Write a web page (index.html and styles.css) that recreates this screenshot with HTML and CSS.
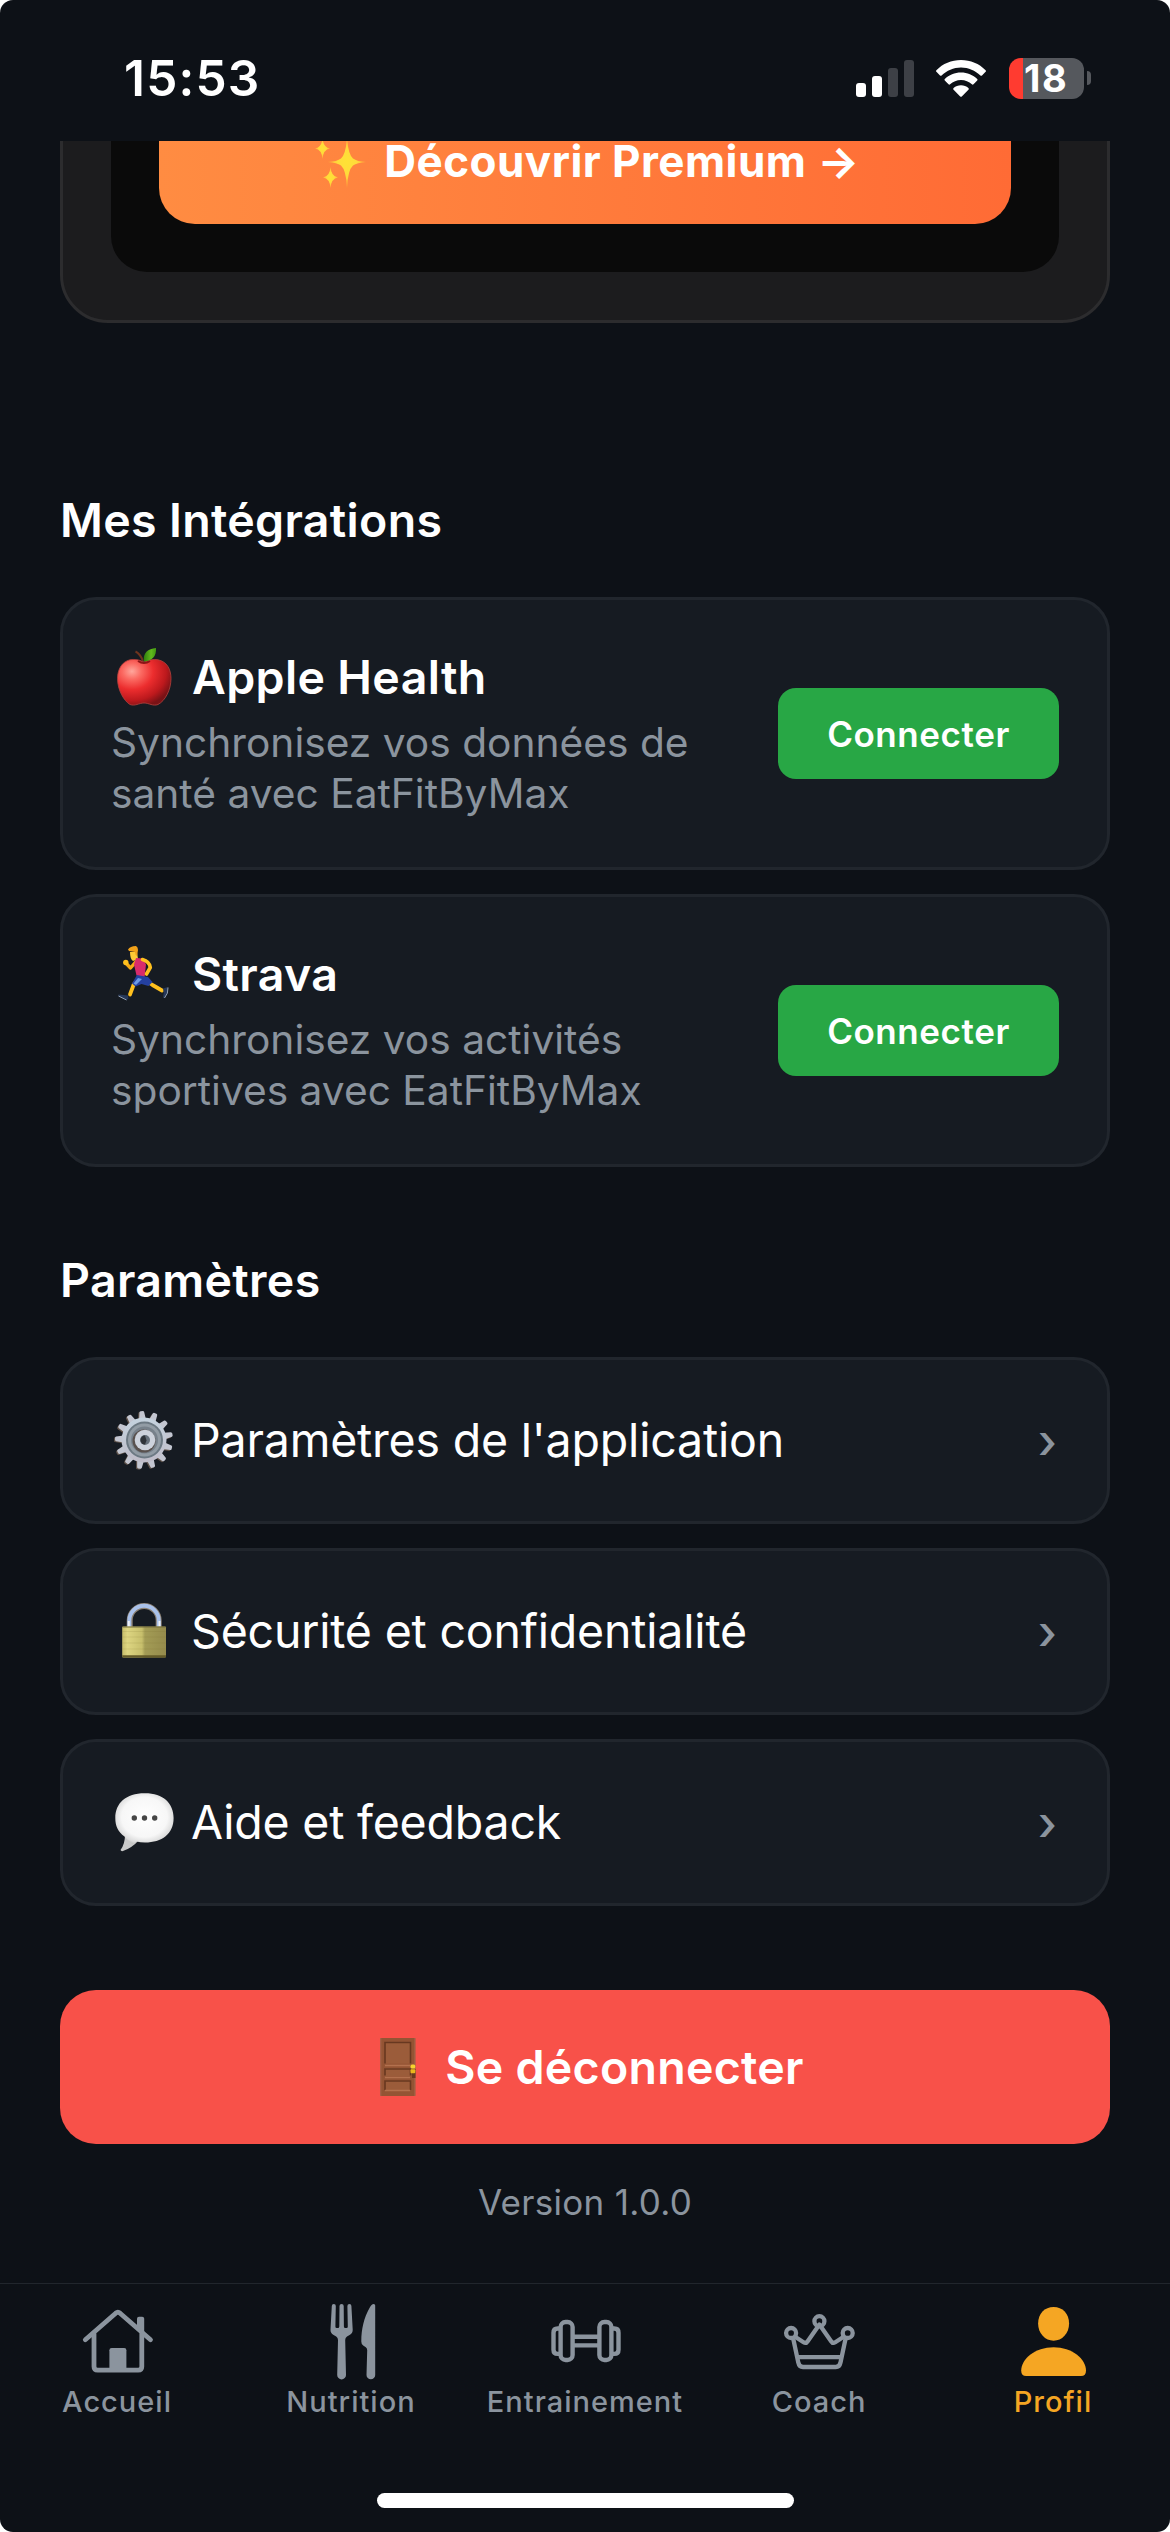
FILE: index.html
```html
<!DOCTYPE html>
<html lang="fr">
<head>
<meta charset="utf-8">
<title>Profil</title>
<link rel="stylesheet" href="styles.css">
</head>
<body>
<div class="screen">
  <header class="status">
    <span class="time">15:53</span>
    <div class="status-icons">
      <svg class="signal" viewBox="0 0 58 37"><g fill="#fff"><rect x="0" y="23" width="10" height="14" rx="3"/><rect x="16" y="16" width="10" height="21" rx="3"/></g><g fill="#3d4046"><rect x="32" y="8" width="10" height="29" rx="3"/><rect x="48" y="0" width="10" height="37" rx="3"/></g></svg>
      <svg class="wifi" viewBox="0 0 50 37" fill="#fff"><path d="M25 0C34.5 0 43.2 3.7 49.6 10.2q.8.8 0 1.6L46 15.4q-.8.8-1.6 0C39.2 10.4 32.5 7.4 25 7.4S10.800 10.4 5.600 15.4q-.8.8-1.600 0L.4 11.800q-.8-.8 0-1.600C6.800 3.7 15.500 0 25 0Z"/><path d="M25 12.500c6.300 0 12 2.500 16.200 6.500q.8.8 0 1.600l-3.700 3.700q-.8.8-1.600 0C33 21.600 29.200 20 25 20s-8 1.600-10.900 4.300q-.8.8-1.600 0l-3.700-3.700q-.8-.8 0-1.600c4.200-4 9.900-6.500 16.200-6.500Z"/><path d="M25 25.300c2.800 0 5.400 1 7.400 2.800q.8.8 0 1.600l-6.600 6.700q-.8.8-1.600 0l-6.600-6.700q-.8-.8 0-1.600c2-1.800 4.600-2.800 7.400-2.800Z"/></svg>
      <div class="battery"><span class="level">18</span></div>
      <span class="nub"></span>
    </div>
  </header>

  <main class="content">
    <section class="premium">
      <div class="premium-inner">
        <button class="premium-button">
          <svg class="emoji-m" viewBox="0 0 56 56"><defs><radialGradient id="spark"><stop offset="0" stop-color="#ffe135"/><stop offset=".5" stop-color="#ffdb3b"/><stop offset="1" stop-color="#ffb13a"/></radialGradient></defs><g fill="url(#spark)"><path d="M34 3Q34.800 21 40 25.500Q44 28.500 53 29Q44 29.500 40 32.500Q34.800 37 34 55Q33.200 37 28 32.500Q24 29.500 15 29Q24 28.500 28 25.500Q33.200 21 34 3Z"/><path d="M9.500 5Q10.200 14.500 17 15.500Q10.200 16.500 9.500 26Q8.800 16.500 2 15.500Q8.800 14.500 9.500 5Z"/><path d="M17.500 34Q18.200 43.500 25 44.500Q18.200 45.500 17.500 55Q16.800 45.500 10 44.500Q16.800 43.500 17.500 34Z"/></g></svg>
          <span>Découvrir Premium →</span>
        </button>
      </div>
    </section>

    <section class="integrations">
      <h2>Mes Intégrations</h2>
      <article class="card">
        <div class="card-text">
          <h3><svg class="emoji" viewBox="0 0 60 60"><defs><radialGradient id="apple" cx=".27" cy=".26" r=".8"><stop offset="0" stop-color="#ffa79c"/><stop offset=".22" stop-color="#fb6a62"/><stop offset=".5" stop-color="#ec2d2e"/><stop offset=".8" stop-color="#bd191d"/><stop offset="1" stop-color="#7a1216"/></radialGradient><linearGradient id="leaf"><stop offset="0" stop-color="#2f7d0d"/><stop offset=".6" stop-color="#62b81d"/><stop offset="1" stop-color="#3f9710"/></linearGradient></defs><path d="M30 15C35 12.500 40 12 44 12.800C53 14.500 57 22.500 57 31.500C57 43 51 54 44 57.500C39 59.500 35 56 30 56C25 56 21 59.500 16 57.500C10 54 3.500 43 3.500 31.500C3.500 22.500 8 14.500 16 12.800C21 12 25 12.500 30 15Z" fill="url(#apple)" stroke="#b5413c" stroke-width=".8"/><path d="M24 14Q30 18 36 14" fill="none" stroke="#8d1416" stroke-width="2"/><path d="M21.500 4.500Q26 6.500 29 14" fill="none" stroke="#70341e" stroke-width="2"/><path d="M30 14.500C28.500 6 34 1.500 42 1C42.500 9 38.500 14 30 14.500Z" fill="url(#leaf)"/></svg><span>Apple Health</span></h3>
          <p>Synchronisez vos données de santé avec EatFitByMax</p>
        </div>
        <button class="connect">Connecter</button>
      </article>
      <article class="card">
        <div class="card-text">
          <h3><svg class="emoji" viewBox="0 0 60 60"><g fill="none" stroke-linecap="round" stroke-linejoin="round"><path d="M22.500 17L16.500 24L12.300 19.500" stroke="#f5a915" stroke-width="3.400"/><path d="M31 36L38.500 41L48 46.500" stroke="#ffc01e" stroke-width="3.800"/><path d="M26 35Q20 38 18.800 43L16 50.500" stroke="#ffc01e" stroke-width="3.800"/></g><circle cx="11.800" cy="18.500" r="2.700" fill="#ffc01e"/><path d="M16 8h7l1 7-5 2q-3-2-3-9Z" fill="#ffca35"/><path d="M14 5.500Q16 2 22 2q2 1 2 4l-1 6q-2-1-2-4l-6-1Z" fill="#f2a21a"/><path d="M22 14l7 .500 3 6-1.500 13-8-2-2.500-11Z" fill="#d92b6b"/><path d="M23 31l11 2 4.500 5-4 4-7-2-6 2.500-3.500-3Z" fill="#2440a0"/><path d="M24 34l4 1-6 6-2.500-1.500Z" fill="#6c9ae6"/><path d="M28.500 15.500Q35.500 17.500 36.300 23.500L32.500 30" fill="none" stroke="#ffc01e" stroke-width="3.600" stroke-linecap="round" stroke-linejoin="round"/><path d="M4.500 50.500l9.500 1 .500 3-2 1.500-8-4Z" fill="#26385a"/><path d="M49 44.500l4.800-1.500q.700 6-3.300 11l-1.500-.500q1.500-5 0-9Z" fill="#26385a"/><path d="M4.500 52l8 4M54 43.500q.500 6-3.500 10.500" fill="none" stroke="#93a0b2" stroke-width="1"/></svg><span>Strava</span></h3>
          <p>Synchronisez vos activités sportives avec EatFitByMax</p>
        </div>
        <button class="connect">Connecter</button>
      </article>
    </section>

    <section class="settings">
      <h2>Paramètres</h2>
      <div class="row">
        <svg class="emoji" viewBox="0 0 60 60"><defs><linearGradient id="steel" x2="0" y2="1"><stop offset="0" stop-color="#c5d3df"/><stop offset="1" stop-color="#bfbcc8"/></linearGradient><path id="tooth" d="M26.800 10L27.900 2Q28.300 1 29.300 1H31.300Q32.300 1 32.600 2L33.800 10Z"/><g id="teeth"><use href="#tooth"/><use href="#tooth" transform="rotate(27.690 30 30)"/><use href="#tooth" transform="rotate(55.380 30 30)"/><use href="#tooth" transform="rotate(83.080 30 30)"/><use href="#tooth" transform="rotate(110.770 30 30)"/><use href="#tooth" transform="rotate(138.460 30 30)"/><use href="#tooth" transform="rotate(166.150 30 30)"/><use href="#tooth" transform="rotate(193.850 30 30)"/><use href="#tooth" transform="rotate(221.540 30 30)"/><use href="#tooth" transform="rotate(249.230 30 30)"/><use href="#tooth" transform="rotate(276.920 30 30)"/><use href="#tooth" transform="rotate(304.620 30 30)"/><use href="#tooth" transform="rotate(332.310 30 30)"/></g></defs><g transform="rotate(-5 30 30)"><use href="#teeth" x="-1.200" y=".8" fill="#5d5149"/><use href="#teeth" fill="#c3c6d1"/></g><circle cx="30" cy="30" r="22.500" fill="url(#steel)"/><circle cx="30.500" cy="30" r="18.500" fill="#6c7983"/><circle cx="30.500" cy="30" r="16.500" fill="#929ca5"/><circle cx="30.500" cy="30" r="13.500" fill="#77818b"/><circle cx="30" cy="31" r="11.500" fill="#59514e"/><circle cx="31" cy="30" r="10.300" fill="#cdd2dc"/><circle cx="31" cy="30" r="5" fill="#67717c"/><path d="M31 25.500a4.500 4.500 0 0 0 0 9l1.500-4Z" fill="#30343a"/></svg>
        <span class="label">Paramètres de l'application</span><span class="chevron">›</span>
      </div>
      <div class="row">
        <svg class="emoji" viewBox="0 0 60 60"><defs><linearGradient id="brass"><stop offset="0" stop-color="#c6bd6a"/><stop offset=".12" stop-color="#ddd581"/><stop offset=".45" stop-color="#c7bf6c"/><stop offset=".52" stop-color="#a39c55"/><stop offset="1" stop-color="#958b4c"/></linearGradient></defs><path d="M15.700 27V19.500a14.500 14.500 0 0 1 29 0V27" fill="none" stroke="#8c8172" stroke-width="6"/><path d="M15.300 27V19.500a14.700 14.700 0 0 1 29.500 0V27" fill="none" stroke="#a9c1ea" stroke-width="4"/><path d="M14.800 27V20M45.500 27V20" stroke="#eef1f7" stroke-width="2"/><rect x="8.200" y="25.500" width="43.800" height="31" rx="1" fill="url(#brass)"/><path d="M8.500 26h43" stroke="#756d3d" stroke-width="1"/><path d="M8.500 30.500h43M8.500 36h43M8.500 42h43M8.500 48h43" stroke="#786d2d" stroke-width=".7" opacity=".2"/><path d="M8.200 54.200H52v1.300q0 1-1 1H9.200q-1 0-1-1Z" fill="#645b29"/></svg>
        <span class="label">Sécurité et confidentialité</span><span class="chevron">›</span>
      </div>
      <div class="row">
        <svg class="emoji" viewBox="0 0 60 60"><defs><radialGradient id="bubble" cx=".5" cy=".47" r=".56"><stop offset="0" stop-color="#fff"/><stop offset=".7" stop-color="#f7f7f7"/><stop offset=".92" stop-color="#dcdcdc"/><stop offset="1" stop-color="#c2c2c2"/></radialGradient></defs><path d="M11 43Q11 52 6.500 58Q7 59.500 9 59Q18 56 25 48Z" fill="#c9c9c9"/><path d="M30.500 1.200C49 1 59.600 11 59.600 26C59.600 42 48 50.500 31 50.500Q26 50.500 22.500 49.500L18.500 52Q15 50 10.500 44.500C4 40 1.300 34 1.300 26C1.300 11 12 1.200 30.500 1.200Z" fill="url(#bubble)"/><g fill="#464646"><circle cx="20.300" cy="26" r="2.700"/><circle cx="30.500" cy="26" r="2.700"/><circle cx="40.700" cy="26" r="2.700"/></g></svg>
        <span class="label">Aide et feedback</span><span class="chevron">›</span>
      </div>
    </section>

    <button class="logout">
      <svg class="emoji" viewBox="0 0 60 60"><rect x="12.300" y="1" width="35" height="58" rx=".8" fill="#945434"/><path d="M12.800 1v58M46.900 1v58" stroke="#a1664c" stroke-width="1"/><path d="M17 5.500h25.500v21H17ZM17 31h25.500v8H17ZM17 43.500h25.500v10H17Z" fill="#9b5c3a"/><path d="M17 26.500V5.500h25.500v21M17 38.500V32h25.500v6.500M17 53V44h25.500v9" fill="none" stroke="#683820" stroke-width="1.600"/><path d="M17 28.500h25M17 40.500h25M17 53.500h25" stroke="#b3714e" stroke-width="1.500"/><rect x="44" y="32" width="3.500" height="9" fill="#6a391e"/><rect x="42.500" y="27.500" width="4.800" height="4" rx="1.500" fill="#f4d22e"/><rect x="42.500" y="32.200" width="4.800" height="4" rx="1" fill="#e9b71c"/></svg>
      <span>Se déconnecter</span>
    </button>
    <p class="version">Version 1.0.0</p>
  </main>

  <footer class="footer">
    <nav class="tabs">
      <a class="tab">
        <svg viewBox="0 0 84 84" fill="none" stroke="currentColor" stroke-width="4.800" stroke-linecap="round" stroke-linejoin="round"><path d="M10.300 40.700L40.700 14.200Q42.900 12.400 45.100 14.200L75.500 40.700"/><path d="M19 35V67.500Q19 71.200 22.700 71.200H63.100Q66.800 71.200 66.800 67.500V35"/><path d="M34.400 71V51.200Q34.400 49 36.600 49H49.200Q51.400 49 51.400 51.200V71Z" fill="currentColor" stroke="none"/><path d="M62 28V19.700Q62 17.700 64 17.700H67.200Q69.200 17.700 69.200 19.700V37L62 30Z" fill="currentColor" stroke="none"/></svg>
        <span>Accueil</span>
      </a>
      <a class="tab">
        <svg viewBox="0 0 84 84" fill="currentColor"><path d="M22.800 7a2 2 0 0 1 4 0L26.400 27.500Q26.400 29 27.700 29H29Q30.200 29 30.300 27.500L30.500 7a2.100 2.100 0 0 1 4.200 0L34.900 27.500Q35 29 36.200 29H37.500Q38.800 29 38.800 27.500L38.400 7a2 2 0 0 1 4 0L43.700 30.500Q43.900 34 41 35.700L38 37.500Q36.200 38.700 36.200 41L37 76a4.400 4.400 0 0 1-8.800 0L29 41Q29 38.700 27.200 37.500L24.200 35.700Q21.300 34 21.500 30.500Z"/><path d="M66.200 6.500Q66.200 5 64.700 5Q62.500 5 60.500 9C55 18.500 52.300 30 52.300 42.500Q52.300 45.400 54.200 46.600L56.800 48.300Q58.200 49.300 58.200 51.200L57.500 76a4.300 4.300 0 0 0 8.700 0Z"/></svg>
        <span>Nutrition</span>
      </a>
      <a class="tab">
        <svg viewBox="0 0 84 84" fill="none" stroke="currentColor" stroke-width="4.400"><g id="plates"><rect x="17.600" y="23" width="12" height="38" rx="5"/><path d="M16.500 29.500h-1.800q-4.200 0-4.200 4.200v17q0 4.200 4.200 4.200h1.800"/></g><use href="#plates" transform="matrix(-1 0 0 1 86 0)"/><path d="M30 37.700h26M30 46.400h26"/></svg>
        <span>Entrainement</span>
      </a>
      <a class="tab">
        <svg viewBox="0 0 84 84" fill="none" stroke="currentColor" stroke-width="4.300" stroke-linejoin="round"><circle cx="14.100" cy="34" r="5"/><circle cx="42.400" cy="22.200" r="5"/><circle cx="70.700" cy="34" r="5"/><path d="M18.500 38L26.500 43.200Q29 44.800 30.700 42.200L42.400 25.500L54.100 42.200Q55.800 44.800 58.300 43.200L66.300 38"/><path d="M16.200 39.500L21.300 63.500Q22.200 68 26 68H58.800Q62.600 68 63.500 63.500L68.600 39.500M20.500 58.200H64.300"/></svg>
        <span>Coach</span>
      </a>
      <a class="tab active">
        <svg viewBox="0 0 84 84" fill="currentColor"><path d="M42.600 8C51.500 8 58.100 14.500 58.100 24.500C58.100 34.500 51 41.700 42.600 41.700S27.100 34.500 27.100 24.500C27.100 14.500 33.700 8 42.600 8Z"/><path d="M42.600 48.200C61 48.200 75 60 75 71.500Q75 77 70 77H15.200Q10.200 77 10.200 71.500C10.200 60 24.200 48.200 42.600 48.200Z"/></svg>
        <span>Profil</span>
      </a>
    </nav>
    <div class="home-indicator"></div>
  </footer>
</div>
</body>
</html>
```
FILE: styles.css
```css
* {
  box-sizing: border-box;
}

body {
  margin: 0;
  background: #fff;
  font-family: "Inter", sans-serif;
  color: #fff;
}

h2, h3, p {
  margin: 0;
}

button {
  border: 0;
  font-family: inherit;
  color: inherit;
}

svg {
  display: block;
  flex: none;
}

.screen {
  display: flex;
  flex-direction: column;
  width: 1170px;
  height: 2532px;
  overflow: hidden;
  background: #0d1117;
  border-radius: 13px;
}

/* Status bar */
.status {
  display: flex;
  flex: none;
  justify-content: space-between;
  height: 141px;
  padding: 48px 79px 0 124px;
}

.time {
  font-size: 49.5px;
  font-weight: 600;
  line-height: 60px;
  letter-spacing: 1.2px;
}

.status-icons {
  display: flex;
  align-items: center;
  height: 60px;
}

.signal {
  width: 58px;
  height: 37px;
  margin-right: 22px;
}

.wifi {
  width: 50px;
  height: 37px;
  margin-right: 23px;
}

.battery {
  width: 75px;
  height: 41px;
  border-radius: 12px;
  background: linear-gradient(90deg, #ff3b30 14px, #55585d 14px);
}

.level {
  display: block;
  padding-left: 15px;
  font-size: 38px;
  font-weight: 700;
  line-height: 40px;
  letter-spacing: 1.5px;
}

.nub {
  width: 4px;
  height: 14px;
  margin-left: 3px;
  border-radius: 0 4px 4px 0;
  background: #55585d;
}

/* Scrolled content */
.content {
  flex: 1;
  min-height: 0;
  overflow: hidden;
  padding: 0 60px;
}

.premium {
  margin-top: -142px;
  padding: 48px;
  background: #1c1c1e;
  border: 3px solid #2c2c2e;
  border-radius: 48px;
}

.premium-inner {
  padding: 48px;
  background: #0a0a0a;
  border-radius: 36px;
}

.premium-button {
  display: flex;
  align-items: center;
  justify-content: center;
  gap: 15px;
  width: 100%;
  height: 126px;
  padding: 0 0 0 3px;
  border-radius: 36px;
  background: linear-gradient(90deg, #ff8c42, #ff6b35);
  font-size: 44px;
  font-weight: 700;
  letter-spacing: 0.45px;
}

.emoji {
  width: 60px;
  height: 60px;
}

.emoji-m {
  width: 56px;
  height: 56px;
}

h2 {
  margin-bottom: 48px;
  font-size: 46.5px;
  font-weight: 600;
  line-height: 58px;
  letter-spacing: 0.33px;
}

.integrations {
  display: flex;
  flex-direction: column;
  margin-top: 168px;
}

.card {
  display: flex;
  align-items: center;
  justify-content: space-between;
  height: 273px;
  padding: 0 48px;
  background: #161b22;
  border: 3px solid #21262d;
  border-radius: 36px;
}

.card + .card {
  margin-top: 24px;
}

.card-text {
  width: 600px;
}

h3 {
  display: flex;
  align-items: center;
  gap: 18px;
  height: 57px;
  margin-bottom: 12px;
  padding-left: 3px;
  font-size: 46.5px;
  font-weight: 600;
  letter-spacing: 0.35px;
}

.card p {
  font-size: 40.7px;
  line-height: 51px;
  color: #8b949e;
}

.connect {
  width: 281px;
  height: 91px;
  padding: 0;
  border-radius: 18px;
  background: #28a745;
  font-size: 35px;
  font-weight: 600;
  letter-spacing: 0.57px;
}

.settings {
  margin-top: 84px;
}

.row {
  display: flex;
  align-items: center;
  height: 167px;
  padding: 0 48px 2px 51px;
  background: #161b22;
  border: 3px solid #21262d;
  border-radius: 36px;
}

.row + .row {
  margin-top: 24px;
}

.label {
  flex: 1;
  margin-left: 17px;
  font-size: 46.5px;
  line-height: 58px;
  letter-spacing: -0.2px;
}

.chevron {
  padding: 3px 2px 0 0;
  font-size: 48px;
  font-weight: 500;
  line-height: 58px;
  color: #8b949e;
}

.logout {
  display: flex;
  align-items: center;
  justify-content: center;
  gap: 17px;
  width: 100%;
  height: 154px;
  margin-top: 84px;
  padding: 0 0 0 2px;
  border-radius: 36px;
  background: #f85149;
  font-size: 46.5px;
  font-weight: 600;
  letter-spacing: 0.28px;
}

.version {
  margin-top: 37px;
  font-size: 35px;
  line-height: 43px;
  letter-spacing: 0.3px;
  text-align: center;
  color: #8b949e;
}

/* Tab bar */
.footer {
  display: flex;
  flex: none;
  flex-direction: column;
  height: 249px;
  border-top: 1px solid #21262d;
}

.tabs {
  display: grid;
  grid-template-columns: repeat(5, 1fr);
  padding-top: 15px;
}

.tab {
  display: flex;
  flex-direction: column;
  align-items: center;
  color: #8b949e;
  font-size: 29px;
  font-weight: 500;
  line-height: 37px;
  letter-spacing: 1px;
}

.tab svg {
  width: 84px;
  height: 84px;
}

.tab.active {
  color: #f5a623;
}

.home-indicator {
  width: 417px;
  height: 15px;
  margin: 73px auto 0;
  border-radius: 8px;
  background: #fff;
}
```
